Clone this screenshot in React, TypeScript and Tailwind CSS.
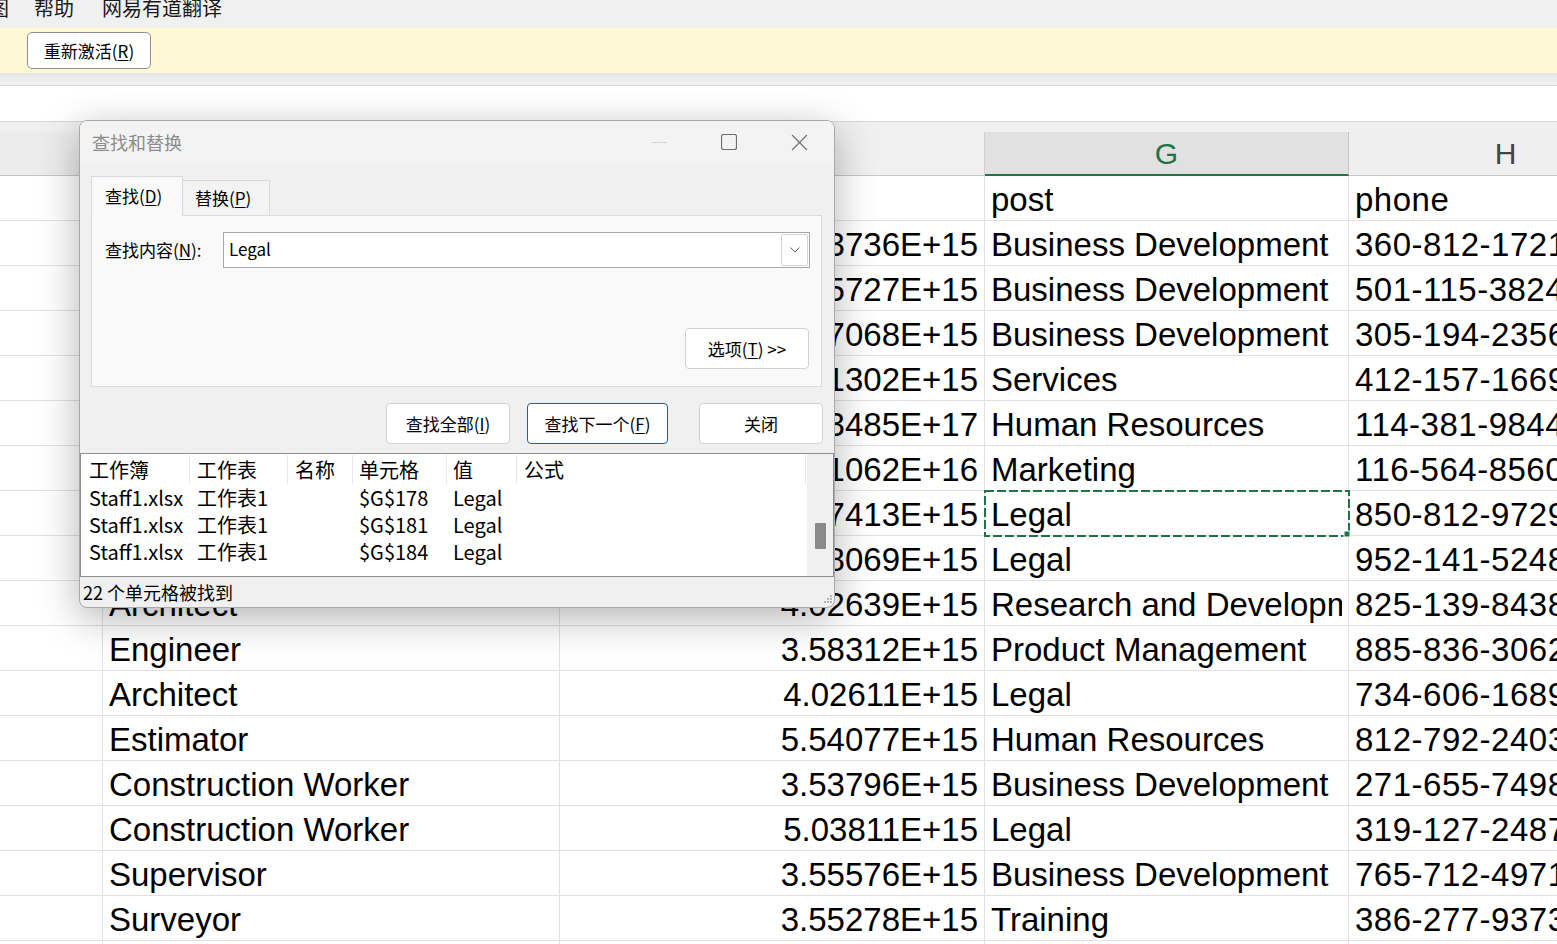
import React from "react";

const cjk = "font-['Noto_Sans_CJK_SC','Noto_Sans',sans-serif]";

type Row = { d?: string; e: string; f: string; g: string; h: string };

const rows: Row[] = [
  { e: "job", f: "id", g: "post", h: "phone" },
  { e: "Engineer", f: "4.53736E+15", g: "Business Development", h: "360-812-1721" },
  { e: "Supervisor", f: "3.55727E+15", g: "Business Development", h: "501-115-3824" },
  { e: "Estimator", f: "5.47068E+15", g: "Business Development", h: "305-194-2356" },
  { e: "Architect", f: "3.51302E+15", g: "Services", h: "412-157-1669" },
  { e: "Surveyor", f: "1.23485E+17", g: "Human Resources", h: "114-381-9844" },
  { e: "Engineer", f: "5.11062E+16", g: "Marketing", h: "116-564-8560" },
  { e: "Construction Manager", f: "3.57413E+15", g: "Legal", h: "850-812-9729" },
  { e: "Electrician", f: "4.38069E+15", g: "Legal", h: "952-141-5248" },
  { e: "Architect", f: "4.02639E+15", g: "Research and Development", h: "825-139-8438" },
  { e: "Engineer", f: "3.58312E+15", g: "Product Management", h: "885-836-3062" },
  { e: "Architect", f: "4.02611E+15", g: "Legal", h: "734-606-1689" },
  { e: "Estimator", f: "5.54077E+15", g: "Human Resources", h: "812-792-2403" },
  { e: "Construction Worker", f: "3.53796E+15", g: "Business Development", h: "271-655-7498" },
  { e: "Construction Worker", f: "5.03811E+15", g: "Legal", h: "319-127-2487" },
  { e: "Supervisor", f: "3.55576E+15", g: "Business Development", h: "765-712-4971" },
  { e: "Surveyor", f: "3.55278E+15", g: "Training", h: "386-277-9373" },
  { e: "Engineer", f: "4.21179E+15", g: "Marketing", h: "402-331-1180" },
];

const cell =
  "box-border h-[45px] shrink-0 border-b border-r border-[#e1e1e1] px-[6px] pt-[3px] leading-[41px] whitespace-nowrap overflow-hidden";

function U({ k }: { k: string }) {
  return (
    <>
      (<span className="underline underline-offset-2">{k}</span>)
    </>
  );
}

function Sheet() {
  return (
    <div className="font-['Liberation_Sans',Arial,sans-serif] text-[33px] text-black">
      {/* column header */}
      <div className="h-[10px] bg-[#f0f0f0]" />
      <div className="flex h-[44px] box-border border-b border-[#c6c6c6] bg-[#f0f0f0] text-[30px] leading-[43px] text-[#444]">
        <div className="w-[103px] shrink-0 bg-[#ececec]" />
        <div className="w-[457px] shrink-0 border-r border-[#d0d0d0] text-center">E</div>
        <div className="w-[425px] shrink-0 border-r border-[#d0d0d0] text-center">F</div>
        <div className="w-[364px] shrink-0 border-r border-[#c6c6c6] bg-[#e1e1e1] text-center text-[#217346] box-border border-b-2 border-b-[#217346] -mb-[1px]">
          G
        </div>
        <div className="w-[313px] shrink-0 bg-[#efefef] text-center">H</div>
      </div>
      {rows.map((r, i) => (
        <div key={i} className="flex">
          <div className={`${cell} w-[103px]`}>{r.d ?? ""}</div>
          <div className={`${cell} w-[457px]`}>{r.e}</div>
          <div className={`${cell} w-[425px] ${i === 0 ? "" : "text-right"}`}>{r.f}</div>
          <div className={`${cell} w-[364px] relative overflow-visible`}>
            <div className="overflow-hidden">{r.g}</div>
            {i === 7 && (
              <svg
                className="absolute -left-[1px] -top-[1px] z-10"
                width="366"
                height="47"
                viewBox="0 0 366 47"
              >
                <rect x="1" y="1" width="364" height="45" fill="none" stroke="#217346" strokeWidth="2" strokeDasharray="9 3" />
                <rect x="360" y="41" width="6" height="6" fill="#217346" stroke="#fff" strokeWidth="1" />
              </svg>
            )}
          </div>
          <div className={`${cell} w-[313px] tracking-[0.5px]`}>{r.h}</div>
        </div>
      ))}
    </div>
  );
}

function Btn({ className, children }: { className: string; children: React.ReactNode }) {
  return (
    <div
      className={`box-border flex h-[41px] items-center justify-center rounded-[4px] border bg-white text-[17px] text-black ${className}`}
    >
      {children}
    </div>
  );
}

function Dialog() {
  const listCols = [
    { w: "w-[109px]", pl: "pl-[8px]", t: "工作簿" },
    { w: "w-[98px]", pl: "pl-[7px]", t: "工作表" },
    { w: "w-[65px]", pl: "pl-[7px]", t: "名称" },
    { w: "w-[94px]", pl: "pl-[6px]", t: "单元格" },
    { w: "w-[70px]", pl: "pl-[6px]", t: "值" },
    { w: "w-[289px]", pl: "pl-[7px]", t: "公式" },
  ];
  const found = [
    ["Staff1.xlsx", "工作表1", "", "$G$178", "Legal", ""],
    ["Staff1.xlsx", "工作表1", "", "$G$181", "Legal", ""],
    ["Staff1.xlsx", "工作表1", "", "$G$184", "Legal", ""],
  ];
  return (
    <div
      className={`absolute left-[79px] top-[120px] z-20 box-border flex h-[488px] w-[756px] flex-col overflow-hidden rounded-[8px] border border-[#a9a9a9] bg-[#f0f0f0] shadow-[0_10px_40px_rgba(0,0,0,0.3)] ${cjk}`}
    >
      {/* title bar */}
      <div className="flex h-[42px] shrink-0 items-center bg-[#f3f3f3]">
        <div className="pl-[12px] text-[18px] text-[#8c8c8c]">查找和替换</div>
        <div className="ml-auto flex h-full">
          <div className="flex w-[70px] items-center justify-center">
            <div className="h-px w-[15px] bg-[#d6d6d6]" />
          </div>
          <div className="flex w-[70px] items-center justify-center">
            <svg width="16" height="16" viewBox="0 0 16 16">
              <rect x="0.5" y="0.5" width="15" height="15" rx="2" fill="none" stroke="#6e6e6e" strokeWidth="1.2" />
            </svg>
          </div>
          <div className="flex w-[70px] items-center justify-center">
            <svg width="17" height="17" viewBox="0 0 17 17">
              <path d="M1 1L16 16M16 1L1 16" stroke="#6e6e6e" strokeWidth="1.1" />
            </svg>
          </div>
        </div>
      </div>

      {/* body */}
      <div className="flex flex-col px-[11px] pt-[13px]">
        <div className="flex h-[39px] items-end text-[17px] text-black">
          <div className="relative z-10 -mb-[1px] box-border h-[40px] w-[92px] border border-b-0 border-[#d9d9d9] bg-[#f9f9f9] pl-[13px] leading-[38px]">
            查找<U k="D" />
          </div>
          <div className="box-border h-[35px] w-[87px] border-r border-t border-[#d9d9d9] bg-[#f3f3f3] pl-[12px] leading-[34px]">
            替换<U k="P" />
          </div>
        </div>
        <div className="box-border h-[172px] w-[731px] border border-[#dcdcdc] bg-[#f9f9f9] pl-[13px] pr-[11px] pt-[16px]">
          <div className="flex items-center">
            <div className="w-[118px] text-[17px] text-black">
              查找内容<U k="N" />:
            </div>
            <div className="box-border flex h-[36px] w-[587px] items-center border border-[#a7a7a7] bg-white pl-[5px] pr-[1px]">
              <div className="-mt-[3px] text-[17px] text-black">Legal</div>
              <div className="ml-auto flex h-[32px] w-[27px] items-center justify-center rounded-[2px] border border-[#d4d4d4] bg-white">
                <svg width="10" height="6" viewBox="0 0 10 6">
                  <path d="M0.5 0.5L5 5L9.5 0.5" fill="none" stroke="#5e5e5e" strokeWidth="1" />
                </svg>
              </div>
            </div>
          </div>
          <div className="mt-[60px] flex justify-end pr-[1px]">
            <Btn className="w-[124px] border-[#d2d2d2]">
              选项<U k="T" />&nbsp;&gt;&gt;
            </Btn>
          </div>
        </div>
        <div className="mt-[16px] flex justify-end">
          <Btn className="w-[124px] border-[#d2d2d2]">
            查找全部<U k="I" />
          </Btn>
          <Btn className="ml-[17px] w-[141px] border-[#0067c0]">
            查找下一个<U k="F" />
          </Btn>
          <Btn className="ml-[31px] w-[124px] border-[#d2d2d2]">关闭</Btn>
        </div>
      </div>

      {/* results list */}
      <div className="mt-[9px] box-border flex h-[124px] shrink-0 border border-[#8e8e8e] bg-white text-[20px] text-black">
        <div className="flex flex-1 flex-col">
          <div className="flex h-[30px] items-center">
            {listCols.map((c, i) => (
              <div
                key={i}
                className={`${c.w} ${c.pl} box-border h-[29px] shrink-0 border-r border-[#e8e8e8] leading-[29px]`}
              >
                {c.t}
              </div>
            ))}
          </div>
          {found.map((r, ri) => (
            <div key={ri} className="flex h-[27px] items-center">
              {r.map((v, i) => (
                <div key={i} className={`${listCols[i].w} ${listCols[i].pl} shrink-0 leading-[27px]`}>
                  {v}
                </div>
              ))}
            </div>
          ))}
        </div>
        <div className="relative w-[26px] shrink-0 bg-[#f0f0f0]">
          <div className="absolute left-[8px] top-[69px] h-[26px] w-[11px] rounded-[1px] bg-[#8a8a8a]" />
        </div>
      </div>

      {/* status */}
      <div className="relative flex h-[30px] items-center pl-[3px] text-[18px] text-black">
        22 个单元格被找到
        <svg className="absolute bottom-[1px] right-[1px]" width="11" height="11" viewBox="0 0 11 11">
          <g fill="#b4b4b4">
            <rect x="8" y="0" width="2" height="2" />
            <rect x="5" y="3" width="2" height="2" />
            <rect x="8" y="3" width="2" height="2" />
            <rect x="2" y="6" width="2" height="2" />
            <rect x="5" y="6" width="2" height="2" />
            <rect x="8" y="6" width="2" height="2" />
          </g>
        </svg>
      </div>
    </div>
  );
}

export default function App() {
  return (
    <div className="relative h-[944px] w-[1557px] overflow-hidden bg-white">
      {/* menu bar */}
      <div className={`flex h-[28px] items-start bg-[#f0f0f0] text-[20px] leading-[16px] text-[#1a1a1a] ${cjk}`}>
        <span className="-ml-[11px]">图</span>
        <span className="ml-[25px]">帮助</span>
        <span className="ml-[28px]">网易有道翻译</span>
      </div>
      {/* activation bar */}
      <div className={`flex h-[45px] items-start bg-[#fef8d6] ${cjk}`}>
        <div className="mt-[4px] ml-[27px] box-border flex h-[37px] w-[124px] items-center justify-center rounded-[5px] border border-[#8f8f8f] bg-white text-[17px] text-black">
          重新激活<U k="R" />
        </div>
      </div>
      <div className="h-[12px] bg-gradient-to-b from-[#e4e4e4] to-[#f4f4f4]" />
      {/* formula bar */}
      <div className="box-border h-[37px] border-y border-[#d6d6d6] bg-white" />
      <Sheet />
      <Dialog />
    </div>
  );
}
